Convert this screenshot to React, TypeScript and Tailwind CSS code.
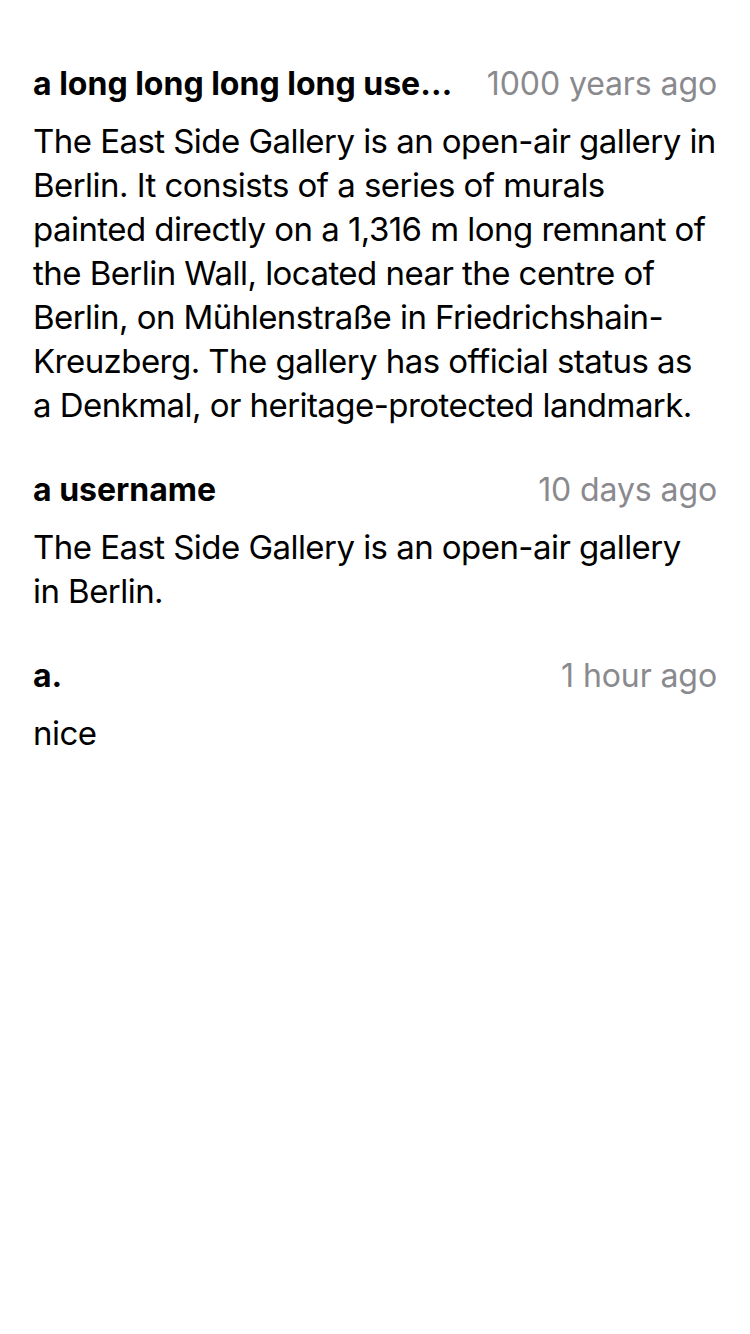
import React from 'react';

const comments = [
  {
    user: 'a long long long long username that keeps going',
    time: '1000 years ago',
    lines: [
      'The East Side Gallery is an open-air gallery in',
      'Berlin. It consists of a series of murals',
      'painted directly on a 1,316 m long remnant of',
      'the Berlin Wall, located near the centre of',
      'Berlin, on Mühlenstraße in Friedrichshain-',
      'Kreuzberg. The gallery has official status as',
      'a Denkmal, or heritage-protected landmark.',
    ],
  },
  {
    user: 'a username',
    time: '10 days ago',
    lines: ['The East Side Gallery is an open-air gallery', 'in Berlin.'],
  },
  {
    user: 'a.',
    time: '1 hour ago',
    lines: ['nice'],
  },
];

const App = () => {
  return (
    <div
      className="min-h-screen w-[750px] bg-white px-[33px] pt-[62px]"
      style={{ fontFamily: 'Inter, "Noto Sans", sans-serif' }}
    >
      <div className="flex flex-col gap-[41px]">
        {comments.map((c) => (
          <div key={c.time} className="flex flex-col gap-[13px]">
            {/* header */}
            <div className="flex items-center h-[44px]">
              <span className="flex-1 min-w-0 truncate text-[32px] font-bold tracking-[0px] text-black">
                {c.user}
              </span>
              <span className="shrink-0 ml-[22px] text-[32px] tracking-[-0.1px] text-[#8a8a8e]">
                {c.time}
              </span>
            </div>
            {/* body */}
            <p className="text-[33px] leading-[44px] tracking-[-0.55px] text-black">
              {c.lines.map((l, i) => (
                <React.Fragment key={i}>
                  {l}
                  {i < c.lines.length - 1 && <br />}
                </React.Fragment>
              ))}
            </p>
          </div>
        ))}
      </div>
    </div>
  );
};

export default App;
